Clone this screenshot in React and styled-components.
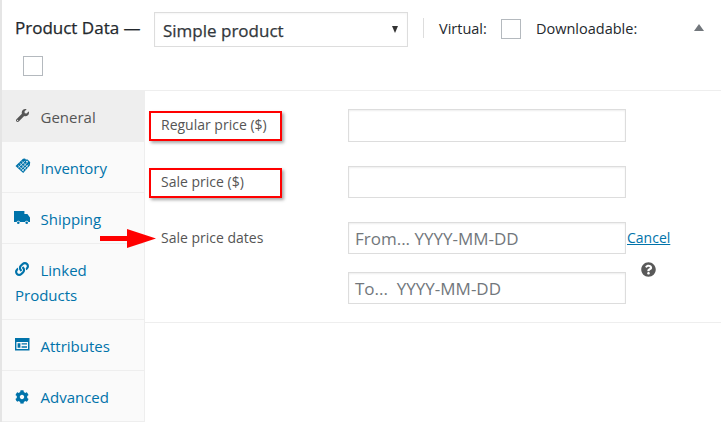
import React from 'react';
import styled, { createGlobalStyle } from 'styled-components';
import { FaWrench, FaLink, FaCog, FaQuestionCircle } from 'react-icons/fa';

const GlobalStyle = createGlobalStyle`
  html, body { margin: 0; padding: 0; background: #fff; }
  body { font-family: "Open Sans", "Noto Sans", sans-serif; color: #555; }
`;

const Box = styled.div`
  width: 721px;
  height: 422px;
  box-sizing: border-box;
  border-left: 2px solid #e5e5e5;
  overflow: hidden;
`;

const Header = styled.div`
  height: 91px;
  box-sizing: border-box;
  border-bottom: 1px solid #eee;
  padding: 12px 0 0 13px;
  position: relative;
`;

const HeaderRow = styled.div`
  display: flex;
  align-items: flex-start;
`;

const Title = styled.span`
  font-size: 17px;
  font-weight: 500;
  -webkit-text-stroke: 0.25px #23282d;
  line-height: 32px;
  width: 139px;
  color: #23282d;
  white-space: nowrap;
`;

const TypeSelect = styled.div`
  width: 254px;
  height: 35px;
  box-sizing: border-box;
  border: 1px solid #ddd;
  box-shadow: inset 0 1px 2px rgba(0, 0, 0, 0.04);
  display: flex;
  align-items: center;
  justify-content: space-between;
  padding: 2px 9px 0 8px;
  font-size: 17px;
  font-weight: 500;
  -webkit-text-stroke: 0.25px #32373c;
  color: #32373c;
`;

const Caret = styled.span`
  width: 0;
  height: 0;
  margin-top: -2px;
  border-left: 3.5px solid transparent;
  border-right: 3.5px solid transparent;
  border-top: 7px solid #333;
`;

const Divider = styled.span`
  width: 1px;
  height: 20px;
  background: #ddd;
  margin: 6px 15px 0 15px;
`;

const OptionLabel = styled.span`
  font-size: 14.5px;
  font-weight: 500;
  line-height: 34px;
  color: #23282d;
  width: ${p => p.$width}px;
  white-space: nowrap;
`;

const Check = styled.span`
  display: block;
  width: 20px;
  height: 20px;
  box-sizing: border-box;
  border: 1px solid #b4b9be;
  background: #fff;
  margin: ${p => p.$margin};
`;

const Toggle = styled.span`
  position: absolute;
  left: 692px;
  top: 24px;
  width: 0;
  height: 0;
  border-left: 5px solid transparent;
  border-right: 5px solid transparent;
  border-bottom: 7px solid #72777c;
`;

const Body = styled.div`
  display: flex;
  height: 331px;
`;

const Tabs = styled.ul`
  list-style: none;
  margin: 0;
  padding: 0;
  width: 143px;
  flex: none;
  box-sizing: border-box;
  background: #fafafa;
  border-right: 1px solid #eee;
`;

const Tab = styled.li`
  box-sizing: border-box;
  height: ${p => p.$height}px;
  padding: 14px 8px 0 13px;
  border-bottom: 1px solid #eee;
  background: ${p => (p.$active ? '#eee' : 'transparent')};
  color: ${p => (p.$active ? '#555' : '#0073aa')};
  font-size: 15px;
  line-height: 25px;
`;

const TabIcon = styled.span`
  display: inline-flex;
  width: 25.5px;
  height: 14px;
  vertical-align: top;
  padding-top: ${p => p.$top}px;
  color: ${p => p.$color || 'inherit'};
  svg {
    display: block;
    flex: none;
    margin-left: ${p => p.$shift || 0}px;
  }
`;

const Panel = styled.div`
  flex: 1;
  min-width: 0;
`;

const Fields = styled.div`
  height: 232px;
  box-sizing: border-box;
  border-bottom: 1px solid #eee;
  padding: 18px 0 0 16px;
  display: flex;
  flex-direction: column;
`;

const Field = styled.div`
  display: flex;
  align-items: flex-start;
  margin-bottom: ${p => p.$mb}px;
`;

const FieldLabel = styled.label`
  position: relative;
  width: 187px;
  flex: none;
  font-size: 14px;
  line-height: 18px;
  padding-top: 7px;
  color: #555;
`;

const Annotation = styled.span`
  position: absolute;
  left: -12px;
  top: ${p => p.$top}px;
  width: 133px;
  height: 30px;
  box-sizing: border-box;
  border: 2px solid #f00;
  box-shadow: 2px 2px 3px rgba(0, 0, 0, 0.35);
`;

const TextBox = styled.div`
  width: 278px;
  height: ${p => p.$height}px;
  box-sizing: border-box;
  border: 1px solid #ddd;
  box-shadow: inset 0 1px 2px rgba(0, 0, 0, 0.07);
  background: #fff;
  padding-left: 6px;
  font-size: 17px;
  line-height: 32px;
  color: #72777c;
  white-space: pre;
`;

const Dates = styled.div`
  display: grid;
  grid-template-columns: 278px auto;
  row-gap: 18px;
`;

const CancelLink = styled.a`
  font-size: 14px;
  line-height: 18px;
  padding-top: 7px;
  padding-left: 1px;
  color: #0073aa;
  text-decoration: underline;
  white-space: nowrap;
`;

const Help = styled.span`
  color: #595959;
  padding: 0 0 0 15px;
  margin-top: -10px;
  svg { display: block; }
`;

const Arrow = styled.svg`
  position: absolute;
  left: -61px;
  top: 7px;
`;

const InventoryIcon = () => (
  <svg width="16" height="16" viewBox="0 0 16 16">
    <path fill="currentColor" d="M0.5 8 L8 0.8 L10 0.6 L10.8 1.6 L12.6 1.4 L15.2 4.2 L14.8 7.4 L8.2 15 Z" />
    <g stroke="#fafafa" strokeWidth="0.7">
      <path d="M4.6 5 L11 11.4 M6.6 3.2 L13 9.4 M3 7.4 L9 13.2" />
      <path d="M10 2.8 L3.4 9.6 M12 4.6 L5.4 11.4 M13.4 6.6 L7 13" />
    </g>
    <circle cx="12" cy="3.6" r="0.9" fill="#fafafa" />
  </svg>
);

const TruckIcon = () => (
  <svg width="16" height="14" viewBox="0 0 16 14">
    <path fill="currentColor" d="M0 0 H10.4 V3 H13.4 L16 6.4 V11 H14.4 A1.8 1.8 0 0 0 11 11 H6 A1.8 1.8 0 0 0 2.6 11 H0 Z" />
    <circle cx="4.3" cy="11.8" r="1.3" fill="currentColor" />
    <circle cx="12.7" cy="11.8" r="1.3" fill="currentColor" />
  </svg>
);

const AttributesIcon = () => (
  <svg width="15" height="13" viewBox="0 0 15 13">
    <path fill="currentColor" fillRule="evenodd" d="M0 0 H14.5 V12.5 H0 Z M1.4 4 V11 H13 V4 Z" />
    <path fill="currentColor" d="M2.6 5.2 H5.4 V9.8 H2.6 Z M6.6 5.2 H12 V6.6 H6.6 Z M6.6 8.2 H12 V9.8 H6.6 Z" />
  </svg>
);

const tabs = [
  { id: 'general', label: 'General', height: 51, active: true, color: '#555', top: 4, shift: 1, icon: <FaWrench size={13} /> },
  { id: 'inventory', label: 'Inventory', height: 51, top: 2, icon: <InventoryIcon /> },
  { id: 'shipping', label: 'Shipping', height: 51, top: 4, shift: -1, icon: <TruckIcon /> },
  { id: 'linked', label: 'Linked Products', height: 76, top: 4, icon: <FaLink size={14} /> },
  { id: 'attributes', label: 'Attributes', height: 51, top: 4, icon: <AttributesIcon /> },
  { id: 'advanced', label: 'Advanced', height: 51, top: 5, icon: <FaCog size={14} /> },
];

export default function App() {
  return (
    <Box>
      <GlobalStyle />
      <Header>
        <HeaderRow>
          <Title>Product Data —</Title>
          <TypeSelect>
            Simple product
            <Caret />
          </TypeSelect>
          <Divider />
          <OptionLabel $width={62}>Virtual:</OptionLabel>
          <Check $margin="7px 15px 0 0" />
          <OptionLabel>Downloadable:</OptionLabel>
        </HeaderRow>
        <Check $margin="9px 0 0 8px" />
        <Toggle />
      </Header>
      <Body>
        <Tabs>
          {tabs.map(t => (
            <Tab key={t.id} $height={t.height} $active={t.active}>
              <TabIcon $color={t.color} $top={t.top} $shift={t.shift}>{t.icon}</TabIcon>
              {t.label}
            </Tab>
          ))}
        </Tabs>
        <Panel>
          <Fields>
            <Field $mb={24}>
              <FieldLabel>
                <Annotation $top={2} />
                Regular price ($)
              </FieldLabel>
              <TextBox $height={33} />
            </Field>
            <Field $mb={24}>
              <FieldLabel>
                <Annotation $top={2} />
                Sale price ($)
              </FieldLabel>
              <TextBox $height={32} />
            </Field>
            <Field $mb={0}>
              <FieldLabel>
                <Arrow width="60" height="20" viewBox="0 0 60 20">
                  <path fill="#f00" d="M0 7 H27 V0 L56 9.5 L27 19 V12 H0 Z" />
                </Arrow>
                Sale price dates
              </FieldLabel>
              <Dates>
                <TextBox $height={32}>From... YYYY-MM-DD</TextBox>
                <CancelLink>Cancel</CancelLink>
                <TextBox $height={32}>To...  YYYY-MM-DD</TextBox>
                <Help><FaQuestionCircle size={15} /></Help>
              </Dates>
            </Field>
          </Fields>
        </Panel>
      </Body>
    </Box>
  );
}
